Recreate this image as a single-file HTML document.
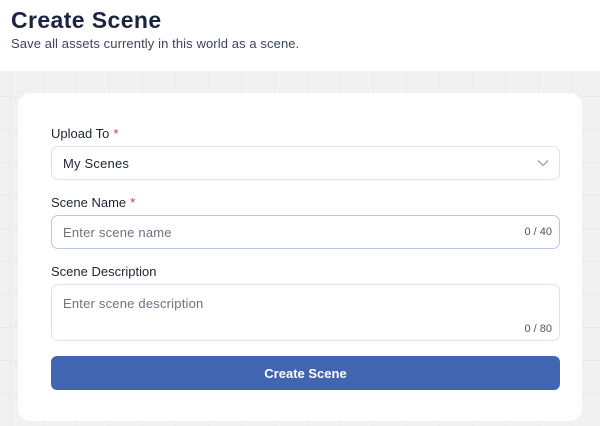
<!DOCTYPE html>
<html><head><style>
*{box-sizing:border-box;margin:0;padding:0}
body{width:600px;height:426px;background:#fff;font-family:"Liberation Sans",sans-serif;position:relative;overflow:hidden}
h1{position:absolute;left:11px;top:7px;font-size:23px;font-weight:bold;color:#1a2440;letter-spacing:0.4px}
.sub{position:absolute;left:11px;top:36px;font-size:13px;color:#3b4458;letter-spacing:0.1px}
.bg{position:absolute;left:0;top:71px;width:600px;height:355px;background-color:#f1f1f1;
background-image:linear-gradient(#eaeaea 1px,transparent 1px),linear-gradient(90deg,#eaeaea 1px,transparent 1px);background-size:33px 33px;background-position:10px 25px}
.card{position:absolute;left:18px;top:93px;width:564px;height:328px;background:#fff;border-radius:12px}
.lbl{position:absolute;left:51px;font-size:13px;color:#1e2433}
.lbl span{color:#d33;margin-left:4px}
.in{position:absolute;left:51px;width:509px;border:1px solid #dfe2e8;border-radius:7px;background:#fff;font-size:13px}
.ph{position:absolute;left:11px;color:#6b7280;letter-spacing:0.2px}
.cnt{position:absolute;right:7px;font-size:11px;color:#4b5563}
.btn{position:absolute;left:51px;top:356px;width:509px;height:34px;background:#4265b1;border-radius:6px;color:#fff;font-size:13px;font-weight:bold;text-align:center;line-height:35px}
</style></head><body>
<h1>Create Scene</h1>
<div class="sub">Save all assets currently in this world as a scene.</div>
<div class="bg"></div>
<div class="card"></div>
<div class="lbl" style="top:126px">Upload To<span>*</span></div>
<div class="in" style="top:146px;height:34px"><div class="ph" style="top:9px;color:#1e2433">My Scenes</div>
<svg style="position:absolute;right:10px;top:12px" width="12" height="8" viewBox="0 0 12 8"><path d="M1 1.5L6 6.5L11 1.5" fill="none" stroke="#9aa0aa" stroke-width="1.3"/></svg></div>
<div class="lbl" style="top:195px">Scene Name<span>*</span></div>
<div class="in" style="top:215px;height:34px;border-color:#b9c6e3"><div class="ph" style="top:9px">Enter scene name</div><div class="cnt" style="top:10px">0 / 40</div></div>
<div class="lbl" style="top:264px">Scene Description</div>
<div class="in" style="top:284px;height:57px"><div class="ph" style="top:11px">Enter scene description</div><div class="cnt" style="top:38px">0 / 80</div></div>
<div class="btn">Create Scene</div>
</body></html>
